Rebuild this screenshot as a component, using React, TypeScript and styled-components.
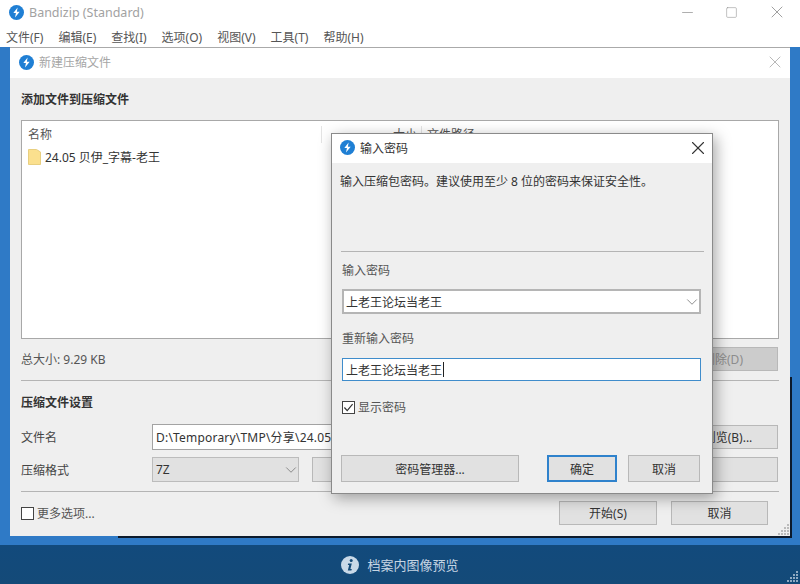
import React from 'react';
import styled, { createGlobalStyle } from 'styled-components';
import { FiX, FiMinus, FiSquare, FiChevronDown } from 'react-icons/fi';

const FONT = `"Noto Sans", "Noto Sans CJK SC", sans-serif`;

const GlobalStyle = createGlobalStyle`
    html, body {
        margin: 0;
        padding: 0;
        background: #fff;
    }
    body {
        width: 800px;
        height: 584px;
        overflow: hidden;
        font-family: ${FONT};
        font-size: 12px;
        color: #333;
    }
    * {
        box-sizing: border-box;
    }
`;

const Screen = styled.div`
    width: 800px;
    height: 584px;
    display: grid;
    grid-template-rows: 47px 1fr 39px;
    position: relative;
    overflow: hidden;
`;

const AppHeader = styled.header`
    background: #fff;
    display: flex;
    flex-direction: column;
`;

const AppTitleRow = styled.div`
    height: 24px;
    display: flex;
    align-items: center;
    padding-left: 9px;
    gap: 5px;
    color: #a2a2a2;
    font-size: 12.5px;
`;

const WindowControls = styled.div`
    margin-left: auto;
    display: flex;
    align-items: center;
    color: #8d8d8d;
    gap: 29px;
    padding-right: 13px;
`;

const MenuBar = styled.nav`
    display: flex;
    padding: 3px 0 0 6px;
    gap: 15px;
    color: #555;
    height: 23px;
    align-items: center;
`;

const Desktop = styled.div`
    background: #2f7ac6;
    padding: 1px 10px 9px;
    display: flex;
    min-height: 0;
`;

const MainDialog = styled.section`
    flex: 1;
    background: #efefef;
    display: flex;
    flex-direction: column;
    position: relative;
    box-shadow: 0 -1px 0 #aaa;

    &::after {
        content: '';
        position: absolute;
        left: 108px;
        right: -2px;
        bottom: -2px;
        height: 2px;
        background: #0c1a2c;
    }
`;

const RightEdge = styled.div`
    position: absolute;
    right: -2px;
    bottom: -2px;
    width: 2px;
    height: 161px;
    background: #0c1a2c;
`;

const DialogTitle = styled.div`
    height: 30px;
    flex: none;
    background: #fff;
    display: flex;
    align-items: center;
    padding: 0 5px 2px 9px;
    gap: 5px;
    color: #a6a6a6;
`;

const CloseSlot = styled.span<{ $color: string }>`
    margin-left: auto;
    display: flex;
    color: ${p => p.$color};
`;

const DialogBody = styled.div`
    flex: 1;
    padding: 12px 11px 0;
    display: flex;
    flex-direction: column;
`;

const Heading = styled.div`
    font-weight: 700;
    color: #333;
    height: 18px;
    line-height: 18px;
    padding-top: 1px;
`;

const FileList = styled.div`
    margin-top: 12px;
    height: 219px;
    background: #fff;
    border: 1px solid #a8a8a8;
    padding: 5px 6px;
    position: relative;
`;

const ListHeader = styled.div`
    height: 17px;
    display: flex;
    color: #555;
    line-height: 17px;
`;

const ListColumn = styled.span<{ $width: number }>`
    width: ${p => p.$width}px;
    flex: none;
`;

const ColumnPath = styled(ListColumn)`
    border-left: 1px solid #e4e4e4;
    padding-left: 5px;
`;

const ColumnSize = styled(ListColumn)`
    border-left: 1px solid #e4e4e4;
    text-align: right;
    padding-right: 4px;
`;

const ListRow = styled.div`
    display: flex;
    align-items: center;
    gap: 4px;
    margin-top: 5px;
    height: 18px;
    color: #333;
`;

const SummaryRow = styled.div`
    height: 41px;
    display: flex;
    align-items: center;
    justify-content: space-between;
    color: #555;
    padding: 0 1px 2px 0;
`;

const Divider = styled.div`
    height: 1px;
    flex: none;
    background: #b4b4b4;
`;

const SettingsHeading = styled(Heading)`
    margin-top: 13px;
    padding-top: 0;
`;

const FormGrid = styled.div`
    margin: 12px 1px 0 0;
    display: grid;
    grid-template-columns: 131px 147px 13px 1fr;
    grid-template-rows: 26px 25px;
    row-gap: 7px;
    align-items: center;
`;

const FormLabel = styled.span`
    color: #444;
`;

const PathRow = styled.div`
    grid-column: 2 / 5;
    display: flex;
    align-items: center;
    gap: 4px;
    height: 26px;
`;

const TextBox = styled.div<{ $focused?: boolean }>`
    height: 100%;
    flex: 1;
    background: #fff;
    border: 1px solid ${p => (p.$focused ? '#3f8ccb' : '#a3a3a3')};
    display: flex;
    align-items: center;
    padding: 0 3px;
    color: #333;
    white-space: nowrap;
    overflow: hidden;
`;

const PathBox = styled(TextBox)`
    letter-spacing: 0.2px;
`;

const ComboBox = styled.div<{ $light?: boolean }>`
    height: 100%;
    background: ${p => (p.$light ? '#fff' : '#e1e1e1')};
    border: ${p => (p.$light ? '2px solid #b5b5b5' : '1px solid #bcbcbc')};
    display: flex;
    align-items: center;
    justify-content: space-between;
    padding: 0 3px 0 ${p => (p.$light ? 2 : 3)}px;
    color: #333;
`;

const ChevronSlot = styled.span`
    display: flex;
    color: #777;
    margin-right: -5px;
`;

const ActionButton = styled.button<{ $width?: number; $height?: number; $primary?: boolean; $disabled?: boolean; $left?: number }>`
    width: ${p => (p.$width ? `${p.$width}px` : 'auto')};
    height: ${p => (p.$height ? `${p.$height}px` : '100%')};
    margin-left: ${p => p.$left ?? 0}px;
    flex: none;
    background: ${p => (p.$disabled ? '#ccc' : '#e1e1e1')};
    border: ${p => (p.$primary ? '2px solid #2f82cc' : '1px solid #b8b8b8')};
    color: ${p => (p.$disabled ? '#8d8d8d' : '#333')};
    font: inherit;
    padding: 0;
`;

const FooterRow = styled.div`
    flex: 1;
    display: flex;
    align-items: flex-start;
    padding-top: 9px;
`;

const CheckOption = styled.label<{ $left?: number }>`
    display: flex;
    align-items: center;
    gap: 3px;
    color: #555;
    height: 24px;
    margin-left: ${p => p.$left ?? 0}px;
`;

const CheckMark = styled.span`
    width: 13px;
    height: 13px;
    background: #fff;
    border: 1px solid #444;
    display: block;
    flex: none;
`;

const FooterButtons = styled.div`
    margin-left: auto;
    display: flex;
    gap: 14px;
    padding-right: 11px;
`;

const PasswordDialog = styled.section`
    position: absolute;
    left: 331px;
    top: 133px;
    width: 382px;
    height: 361px;
    background: #efefef;
    border: 1px solid #8a8a8a;
    box-shadow: 3px 4px 14px rgba(0, 0, 0, 0.35);
    display: flex;
    flex-direction: column;
`;

const PasswordTitle = styled.div`
    height: 29px;
    flex: none;
    background: #fff;
    display: flex;
    align-items: center;
    padding: 0 3px 2px 8px;
    gap: 5px;
    color: #333;
`;

const PasswordBody = styled.div`
    flex: 1;
    padding: 10px 8px 0 9px;
    display: flex;
    flex-direction: column;
`;

const Hint = styled.div`
    height: 18px;
    line-height: 18px;
    color: #333;
    margin-left: -1px;
`;

const FieldLabel = styled.div`
    color: #555;
    height: 18px;
    line-height: 18px;
    margin-left: 1px;
`;

const FieldBox = styled.div<{ $height: number }>`
    height: ${p => p.$height}px;
    margin: 0 3px 0 1px;
    display: flex;

    & > * {
        flex: 1;
    }
`;

const Caret = styled.span`
    flex: none;
    width: 1px;
    height: 15px;
    background: #222;
    margin-left: 1px;
`;

const Spacer = styled.div<{ $size: number }>`
    height: ${p => p.$size}px;
    flex: none;
`;

const PasswordFooter = styled.div`
    display: flex;
    margin-top: auto;
    margin-bottom: 11px;
`;

const Statusbar = styled.footer`
    background: linear-gradient(#124a7c, #144a78);
    display: flex;
    align-items: center;
    justify-content: center;
    gap: 8px;
    color: #c6d5e3;
    font-size: 13px;
    position: relative;
`;

const ResizeGrip = styled.svg`
    position: absolute;
    right: 2px;
    bottom: 2px;
`;

const FileGrip = styled.svg`
    position: absolute;
    right: 1px;
    bottom: 1px;
`;

const LogoSvg = styled.svg`
    flex: none;
`;

const CheckSvg = styled.svg`
    flex: none;
`;

const Logo = () => (
    <LogoSvg width={15} height={15} viewBox="0 0 16 16">
        <circle cx="8" cy="8" r="8" fill="#1f7fd4" />
        <path d="M9.2 2.6 L4.6 8.6 H7.4 L6.4 13.4 L11.4 7.2 H8.4 Z" fill="#fff" />
    </LogoSvg>
);

const FolderIcon = () => (
    <svg width="13" height="16" viewBox="0 0 13 16">
        <path d="M0.5 0.5 H8.5 L12.5 3 V15.5 H0.5 Z" fill="#fbe08e" stroke="#e8cf80" />
    </svg>
);

const CheckedBox = () => (
    <CheckSvg width="13" height="13" viewBox="0 0 13 13">
        <rect x="0.5" y="0.5" width="12" height="12" fill="#fff" stroke="#444" />
        <path d="M2.4 6.5 L5.2 9.6 L10.6 3.2" fill="none" stroke="#333" strokeWidth="1.2" />
    </CheckSvg>
);

const InfoIcon = () => (
    <svg width="18" height="18" viewBox="0 0 18 18">
        <circle cx="9" cy="9" r="9" fill="#c9d9e8" />
        <circle cx="10.2" cy="4.6" r="1.5" fill="#144a78" />
        <path d="M7.2 7.6 H10.8 L9.4 13 H10.8 L10.4 14.4 H6.8 L8.2 9 H6.8 Z" fill="#144a78" />
    </svg>
);

const GripDots = ({ color }: { color: string }) => (
    <>
        {[[9, 1], [6, 4], [9, 4], [3, 7], [6, 7], [9, 7], [0, 10], [3, 10], [6, 10], [9, 10]].map(([x, y]) => (
            <rect key={`${x}-${y}`} x={x} y={y} width="2" height="2" fill={color} />
        ))}
    </>
);

const MENU_ITEMS = ['文件(F)', '编辑(E)', '查找(I)', '选项(O)', '视图(V)', '工具(T)', '帮助(H)'];

export default function App() {
    return (
        <Screen>
            <GlobalStyle />
            <AppHeader>
                <AppTitleRow>
                    <Logo />
                    Bandizip (Standard)
                    <WindowControls>
                        <FiMinus size={17} strokeWidth={1} />
                        <FiSquare size={13} strokeWidth={1} />
                        <FiX size={20} strokeWidth={1} />
                    </WindowControls>
                </AppTitleRow>
                <MenuBar>
                    {MENU_ITEMS.map(item => <span key={item}>{item}</span>)}
                </MenuBar>
            </AppHeader>

            <Desktop>
                <MainDialog>
                    <DialogTitle>
                        <Logo />
                        <span>新建压缩文件</span>
                        <CloseSlot $color="#a9a9a9"><FiX size={20} strokeWidth={1} /></CloseSlot>
                    </DialogTitle>
                    <DialogBody>
                        <Heading>添加文件到压缩文件</Heading>
                        <FileList>
                            <ListHeader>
                                <ListColumn $width={293}>名称</ListColumn>
                                <ColumnSize $width={100}>大小</ColumnSize>
                                <ColumnPath $width={200}>文件路径</ColumnPath>
                            </ListHeader>
                            <ListRow>
                                <FolderIcon />
                                <span>24.05 贝伊_字幕-老王</span>
                            </ListRow>
                        </FileList>
                        <SummaryRow>
                            <span>总大小: 9.29 KB</span>
                            <ActionButton $width={110} $height={24} $disabled>删除(D)</ActionButton>
                        </SummaryRow>
                        <Divider />
                        <SettingsHeading>压缩文件设置</SettingsHeading>
                        <FormGrid>
                            <FormLabel>文件名</FormLabel>
                            <PathRow>
                                <PathBox>D:\Temporary\TMP\分享\24.05 贝伊_字幕-老王.7z</PathBox>
                                <ActionButton $width={100} $height={24}>浏览(B)...</ActionButton>
                            </PathRow>
                            <FormLabel>压缩格式</FormLabel>
                            <ComboBox>
                                7Z
                                <ChevronSlot><FiChevronDown size={18} strokeWidth={1.1} /></ChevronSlot>
                            </ComboBox>
                            <span />
                            <ActionButton />
                        </FormGrid>
                        <Spacer $size={9} />
                        <Divider />
                        <FooterRow>
                            <CheckOption>
                                <CheckMark />
                                更多选项...
                            </CheckOption>
                            <FooterButtons>
                                <ActionButton $width={98} $height={24}>开始(S)</ActionButton>
                                <ActionButton $width={97} $height={24}>取消</ActionButton>
                            </FooterButtons>
                        </FooterRow>
                    </DialogBody>
                    <RightEdge />
                    <FileGrip width="11" height="12"><GripDots color="#bbb" /></FileGrip>
                </MainDialog>
            </Desktop>

            <Statusbar>
                <InfoIcon />
                档案内图像预览
                <ResizeGrip width="11" height="12"><GripDots color="#8fa9c2" /></ResizeGrip>
            </Statusbar>

            <PasswordDialog>
                <PasswordTitle>
                    <Logo />
                    <span>输入密码</span>
                    <CloseSlot $color="#333"><FiX size={22} strokeWidth={1.2} /></CloseSlot>
                </PasswordTitle>
                <PasswordBody>
                    <Hint>输入压缩包密码。建议使用至少 8 位的密码来保证安全性。</Hint>
                    <Spacer $size={60} />
                    <Divider />
                    <Spacer $size={10} />
                    <FieldLabel>输入密码</FieldLabel>
                    <Spacer $size={9} />
                    <FieldBox $height={25}>
                        <ComboBox $light>
                            上老王论坛当老王
                            <ChevronSlot><FiChevronDown size={18} strokeWidth={1.1} /></ChevronSlot>
                        </ComboBox>
                    </FieldBox>
                    <Spacer $size={16} />
                    <FieldLabel>重新输入密码</FieldLabel>
                    <Spacer $size={10} />
                    <FieldBox $height={23}>
                        <TextBox $focused>上老王论坛当老王<Caret /></TextBox>
                    </FieldBox>
                    <Spacer $size={14} />
                    <CheckOption $left={1}>
                        <CheckedBox />
                        显示密码
                    </CheckOption>
                    <PasswordFooter>
                        <ActionButton $width={178} $height={27}>密码管理器...</ActionButton>
                        <ActionButton $width={70} $height={27} $primary $left={28}>确定</ActionButton>
                        <ActionButton $width={72} $height={27} $left={11}>取消</ActionButton>
                    </PasswordFooter>
                </PasswordBody>
            </PasswordDialog>
        </Screen>
    );
}
